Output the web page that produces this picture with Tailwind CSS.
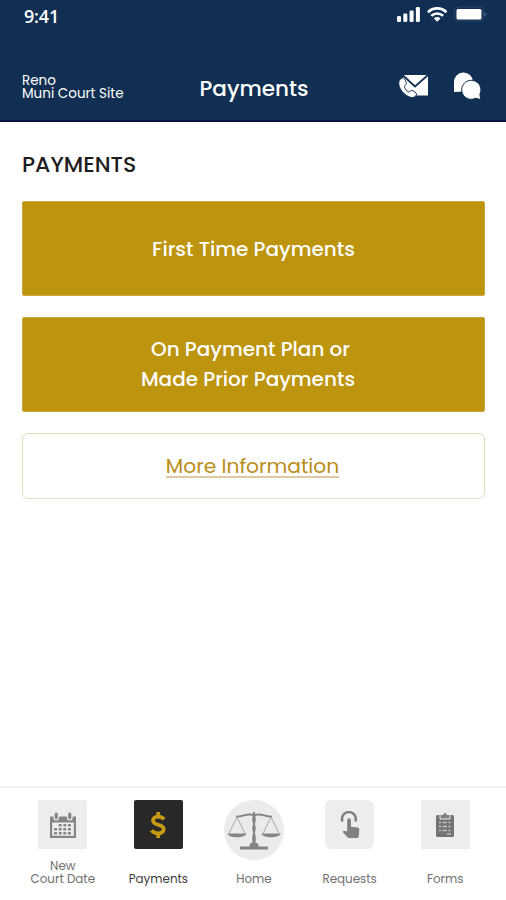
<!DOCTYPE html>
<html lang="en">
<head>
    <meta charset="UTF-8">
    <title>Reno Muni Court - Payments</title>
    <meta name="viewport" content="width=device-width, initial-scale=1.0">
    <script src="https://cdn.jsdelivr.net/npm/@tailwindcss/browser@4"></script>
</head>
<body class="bg-white font-['Poppins','Inter',sans-serif]">
    <div class="flex h-[900px] w-[506px] flex-col overflow-hidden">

        <header class="h-[122px] shrink-0 border-b-2 border-[#07133f] bg-[#112f52] text-white">
            <!-- Status bar -->
            <div class="flex h-[32px] items-center justify-between pl-[24px] pr-[20px]">
                <span class="font-['Open_Sans',sans-serif] text-[18px] font-semibold leading-[32px] tracking-[-0.2px]">9:41</span>
                <svg class="mb-[4px] h-[18px] w-[90px]" viewBox="0 0 90 18" fill="currentColor">
                    <rect x="1" y="11" width="4" height="6" rx="1.2"/>
                    <rect x="7.3" y="8.5" width="4" height="8.5" rx="1.2"/>
                    <rect x="13.6" y="5.5" width="4" height="11.5" rx="1.2"/>
                    <rect x="19.9" y="2" width="4" height="15" rx="1.2"/>
                    <g fill="none" stroke="currentColor" stroke-width="2.7">
                        <path d="M32 7.2a13 13 0 0 1 18.400 0"/>
                        <path d="M35.300 10.900a8.500 8.500 0 0 1 11.800 0"/>
                    </g>
                    <path d="M41.200 16.800l-3.300-3.400a4.700 4.700 0 0 1 6.600 0z"/>
                    <rect x="58.500" y="2" width="29" height="14" rx="3.500" fill="none" stroke="#2c4664" stroke-width="1"/>
                    <rect x="60.500" y="4" width="25" height="10.500" rx="1.500"/>
                    <path d="M88.500 7v4.500q1.200-.8 1.200-2.250T88.500 7z" fill="#60758c"/>
                </svg>
            </div>

            <!-- Title bar -->
            <div class="grid h-[88px] grid-cols-[177px_1fr_177px] items-center pt-[27px]">
                <p class="pb-[5px] pl-[22px] text-[13.5px] leading-[13.5px] whitespace-nowrap">Reno<br>Muni Court Site</p>
                <h1 class="pl-[2px] text-center text-[21.5px] font-medium">Payments</h1>
                <div class="flex items-center justify-end gap-[24px] pb-[8px] pr-[25px]">
                    <svg class="h-[27px] w-[31px]" viewBox="0 0 31 27">
                        <path d="M5 3h25v20.500H11L5 15z" fill="#fff"/>
                        <path d="M4.500 3L17 14.500 30 3" fill="none" stroke="#112f52" stroke-width="1.700"/>
                        <path d="M3 6.500c-3 2-3 7 0 11.500s8.500 8 12 7.500c2-.4 3.500-2 3.600-3.400.1-1-3.700-3.800-5-3.700-1.200.1-2 1.600-3 1.500-1.500-.3-4.300-4.200-4.200-5.600.1-1.100 1.900-1.500 2-2.600.1-1.300-1.900-5.400-3.200-5.800-.7-.2-1.500.1-2.200.6z" fill="#fff" stroke="#112f52" stroke-width="1"/>
                    </svg>
                    <svg class="h-[28px] w-[28px]" viewBox="0 0 28 28" fill="#fff">
                        <path d="M1 20V10.500a9.500 9.500 0 1 1 9.500 9z"/>
                        <path d="M18.300 8.300a9.500 9.500 0 1 0 4.300 17.900l5.100 1.300-.8-5.400A9.500 9.500 0 0 0 18.300 8.300z" stroke="#112f52" stroke-width="1"/>
                    </svg>
                </div>
            </div>
        </header>

        <main class="flex flex-1 flex-col px-[22px] pt-[28px]">
            <h2 class="text-[22px] font-medium leading-[30px] text-[#1d1d1d]">PAYMENTS</h2>
            <div class="mt-[21px] flex flex-col gap-[21px] text-center text-[20px] font-medium leading-[30px]">
                <button class="h-[95px] w-[463px] rounded-[2px] border border-[#caa641] bg-[#bd940e] text-white">First Time Payments</button>
                <button class="h-[95px] w-[463px] rounded-[2px] border border-[#caa641] bg-[#bd940e] pb-[2px] pr-[11px] text-white"><span class="pl-[5px]">On Payment Plan or</span><br>Made Prior Payments</button>
                <button class="h-[66px] w-[463px] rounded-[6px] border border-[#e6d9b8] pr-[2px] text-[20.2px] text-[#b88d18]">
                    <span class="font-normal underline decoration-[#dccba6] decoration-2 underline-offset-[3px]">More Information</span>
                </button>
            </div>
        </main>

        <!-- Bottom tabs -->
        <nav class="grid h-[114px] shrink-0 grid-cols-5 border-t-2 border-[#f1f1f1] pl-[15px] pr-[13px] pt-[12px] text-center text-[11.9px] leading-[13px] text-[#707070]">
            <a class="flex flex-col items-center">
                <span class="grid h-[49px] w-[49px] place-items-center rounded-[2px] bg-[#ededed]">
                    <svg class="h-[28px] w-[28px]" viewBox="0 0 28 28">
                        <path d="M1 5.500h26V27H1z" fill="#858585"/>
                        <path d="M3.200 11.500h21.600v13.300H3.200z" fill="#efefef"/>
                        <g fill="#858585" stroke="#ededed" stroke-width="1.300">
                            <rect x="5" y=".8" width="4.500" height="8" rx="2.200"/>
                            <rect x="18.500" y=".8" width="4.500" height="8" rx="2.200"/>
                        </g>
                        <g stroke="#858585" stroke-width="2.500" stroke-dasharray="3 1.600">
                            <path d="M9.700 14.200h12.200M5.100 18.200h16.800M5.100 22.200h16.800"/>
                        </g>
                    </svg>
                </span>
                <span class="mt-[11px] whitespace-nowrap">New<br>Court Date</span>
            </a>
            <a class="flex flex-col items-center text-[#3c3c3c]">
                <span class="grid h-[49px] w-[49px] place-items-center rounded-[2px] bg-[#282828]">
                    <svg class="h-[28px] w-[18px]" viewBox="0 0 18 28" fill="none" stroke="#c79a14" stroke-width="3.800">
                        <path d="M15 8.300C13.800 6.600 11.800 5.600 9.300 5.600 6 5.600 4 7.200 4 9.500c0 5.600 10.700 3 10.700 8.600 0 2.700-2.300 4.300-5.500 4.300-3 0-5.300-1.200-6.500-3.200M9.200 1v5M9.200 22v5"/>
                    </svg>
                </span>
                <span class="mt-[24px]">Payments</span>
            </a>
            <a class="flex flex-col items-center">
                <span class="grid h-[60px] w-[60px] place-items-center rounded-full bg-[#ebebeb]">
                    <svg class="h-[42px] w-[54px]" viewBox="0 0 54 42" fill="#858585">
                        <path d="M26 3h2l.8 8-.8 4 .8 4-.8 5 .8 4-.3 8h-3l-.3-8 .8-4-.8-5 .8-4-.8-4z"/>
                        <path d="M13 37.500h28V40.500H13zM23.500 34h7l1.500 4H22z"/>
                        <path d="M9 7.500c7 1 11-4.500 18-1 7-3.500 11 2 18 1" fill="none" stroke="#858585" stroke-width="1.800"/>
                        <path d="M10 8L2 24.500M10 8l8 16.500M44 8l-8 16.500M44 8l8 16.500" fill="none" stroke="#aaa" stroke-width="1"/>
                        <path d="M.5 24.500h19c-1 5-18 5-19 0zM34.500 24.500h19c-1 5-18 5-19 0z"/>
                    </svg>
                </span>
                <span class="mt-[13px]">Home</span>
            </a>
            <a class="flex flex-col items-center">
                <span class="grid h-[49px] w-[49px] place-items-center rounded-[7px] bg-[#ededed]">
                    <svg class="h-[28px] w-[20px]" viewBox="0 0 20 28" fill="#808080">
                        <path d="M2.500 10.500A6.900 6.900 0 1 1 15.300 10.500" fill="none" stroke="#808080" stroke-width="2.500"/>
                        <path d="M7.200 9.200a1.900 1.900 0 0 1 3.800 0v6.600l6.500.8c1.200.2 1.900.9 1.800 2l-.5 6.500c-.1 1.300-.8 2-2 2H9.200c-.9 0-1.500-.4-2-1L2.700 21l1-1.300 3.500.8z"/>
                    </svg>
                </span>
                <span class="mt-[24px]">Requests</span>
            </a>
            <a class="flex flex-col items-center">
                <span class="grid h-[49px] w-[49px] place-items-center bg-[#ededed]">
                    <svg class="h-[26px] w-[20px]" viewBox="0 0 20 26">
                        <rect x="1" y="3" width="18" height="22" rx="1.500" fill="#737373"/>
                        <path d="M5 2.500h3a2 2 0 0 1 4 0h3V7H5z" fill="#808080" stroke="#ededed" stroke-width="1"/>
                        <path d="M4 10.500h2M7.500 10.500H12M4 14.500h2M7.500 14.500H12M4 18.500h2M7.500 18.500H12M13.500 10.500h2M13.500 14.500h2M13.500 18.500h2M12 22h4" stroke="#c4c4c4" stroke-width="1.600"/>
                    </svg>
                </span>
                <span class="mt-[24px]">Forms</span>
            </a>
        </nav>
    </div>
</body>
</html>
